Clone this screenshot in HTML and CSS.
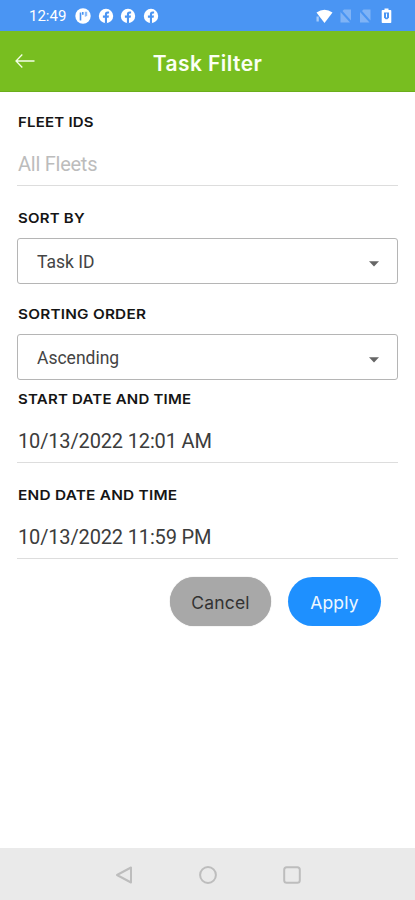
FILE: index.html
```html
<!DOCTYPE html>
<html lang="en">
<head>
<meta charset="utf-8">
<title>Task Filter</title>
<link rel="stylesheet" href="styles.css">
</head>
<body>
<div class="screen">
  <div class="status">
    <span class="clock">12:49</span>
    <svg class="app-icon" viewBox="0 0 16 16"><circle cx="8" cy="8" r="7.700" fill="#fff"/><path d="M5.500 4.500v8M7.800 4v2.800" fill="none" stroke="#4a95f3" stroke-width="1.600"/><path d="M9.800 3.800h2.400v3.400q-1 1.600-2.400 1.600z" fill="#8fbdf8"/></svg>
    <svg class="app-icon" viewBox="0 0 16 16"><circle cx="8" cy="8" r="7.200" fill="#fff"/><path d="M6.900 15.500V9.800H4.900V7.500h2V6.200q0-2.700 2.700-2.700h1.500v2h-1q-1.100 0-1.100 1.200v.8H11l-.4 2.300H9v5.700z" fill="#4a95f3"/></svg>
    <svg class="app-icon" viewBox="0 0 16 16"><circle cx="8" cy="8" r="7.200" fill="#fff"/><path d="M6.900 15.500V9.800H4.900V7.500h2V6.200q0-2.700 2.700-2.700h1.500v2h-1q-1.100 0-1.100 1.200v.8H11l-.4 2.300H9v5.700z" fill="#4a95f3"/></svg>
    <svg class="app-icon" viewBox="0 0 16 16"><circle cx="8" cy="8" r="7.200" fill="#fff"/><path d="M6.900 15.500V9.800H4.900V7.500h2V6.200q0-2.700 2.700-2.700h1.500v2h-1q-1.100 0-1.100 1.200v.8H11l-.4 2.300H9v5.700z" fill="#4a95f3"/></svg>
    <svg class="signals" width="76" height="16" viewBox="0 0 76 16">
      <path d="M.5 4.500Q8.500-1.200 16.500 4.500L8.500 15 3.500 8.500z" fill="#fff"/><path d="M.5 8.500h2.300v5H.5z" fill="#a5caf9"/>
      <g fill="#7fb3f6"><path d="M35 1.500V12.500L26.500 3 28 1.500z"/><path d="M24.500 4l9.500 10.500h-9.500z"/><path d="M54.500 1.500v11L46 3l1.500-1.500z"/><path d="M44 4l9.500 10.500H44z"/></g>
      <path d="M66.500 2h2V.5h4V2h2q.8 0 .8.800v11.400q0 .8-.8.800h-8q-.8 0-.8-.8V2.800q0-.8.800-.8z" fill="#fff"/><path d="M68 4.500h5v5l-1.500 1.800h-2L68 9.500z" fill="#4a95f3"/><path d="M70.500 5.500v4" stroke="#fff"/>
    </svg>
  </div>
  <header class="header">
    <svg class="back" width="20" height="16" viewBox="0 0 20 16"><path d="M7.300 1.500L1 8l6.300 6.500M1 8h18.500" fill="none" stroke="#f4ffe8" stroke-width="1.300"/></svg>
    <h1 class="title">Task Filter</h1>
  </header>
  <main class="form">
    <section class="field">
      <div class="label"><span class="l-fleet">FLEET IDS</span></div>
      <div class="input placeholder">All Fleets</div>
    </section>
    <section class="field">
      <div class="label"><span class="l-sort">SORT BY</span></div>
      <div class="select"><span>Task ID</span><svg width="10" height="6" viewBox="0 0 10 6"><path d="M0 .3h10L5 5.500z" fill="#666"/></svg></div>
    </section>
    <section class="field order">
      <div class="label"><span class="l-order">SORTING ORDER</span></div>
      <div class="select"><span>Ascending</span><svg width="10" height="6" viewBox="0 0 10 6"><path d="M0 .3h10L5 5.500z" fill="#666"/></svg></div>
    </section>
    <section class="field">
      <div class="label"><span class="l-start">START DATE AND TIME</span></div>
      <div class="input">10/13/2022 12:01 AM</div>
    </section>
    <section class="field last">
      <div class="label"><span class="l-end">END DATE AND TIME</span></div>
      <div class="input">10/13/2022 11:59 PM</div>
    </section>
    <div class="actions">
      <button class="btn cancel">Cancel</button>
      <button class="btn apply">Apply</button>
    </div>
  </main>
  <nav class="nav">
    <svg width="18" height="18" viewBox="0 0 18 18"><path d="M16 1.500v15L2 9z"/></svg>
    <svg width="18" height="18" viewBox="0 0 18 18"><circle cx="9" cy="9" r="7.900"/></svg>
    <svg width="18" height="18" viewBox="0 0 18 18"><rect x="1.200" y="1.200" width="15.600" height="15.600" rx="2.500"/></svg>
  </nav>
</div>
</body>
</html>
```
FILE: styles.css
```css
* { box-sizing: border-box; }
body { margin: 0; background: #fff; font-family: Roboto, sans-serif; }
.screen { width: 415px; height: 900px; display: flex; flex-direction: column; overflow: hidden; }
.status { height: 31px; flex: none; background: #4a95f3; display: flex; align-items: center; padding: 1px 23px 0 29px; color: #fff; }
.clock { width: 46px; font-size: 15px; font-weight: 400; white-space: nowrap; }
.app-icon { width: 16px; height: 16px; margin-right: 6.700px; flex: none; }
.signals { margin-left: auto; }
.header { height: 61px; flex: none; background: #78be20; border-bottom: 1px solid #6bae1c; display: grid; grid-template-columns: 38px 1fr 38px; align-items: center; padding-top: 5px; }
.back { margin-left: 15px; margin-top: -5px; }
.title { margin: 0; text-align: center; color: #fbfff5; font: 600 21px/30px Inter, sans-serif; letter-spacing: 0.450px; }
.form { flex: 1; padding: 18px 17px 0; }
.field { height: 96px; }
.order { height: 85px; }
.last { height: 94px; }
.label { height: 24px; padding-left: 1px; font: 600 13.500px/24px Inter, sans-serif; color: #151515; white-space: nowrap; }
.label span { display: inline-block; transform-origin: left center; letter-spacing: 0.200px; transform: scaleX(1.110); }
.label .l-order { transform: scaleX(1.135); }
.label .l-end { transform: scaleX(1.140); }
.input { height: 52px; padding: 18px 1px 0; font-size: 20px; line-height: 24px; letter-spacing: -0.150px; border-bottom: 1px solid #ddd; color: #3c3c3c; font-weight: 400; }
.placeholder { color: #bcbcbc; letter-spacing: -0.250px; }
.select { margin-top: 8px; height: 46px; border: 1px solid #b5b5b5; border-radius: 3px; display: flex; align-items: center; justify-content: space-between; padding: 1px 18px 0 19px; font-size: 17.500px; color: #444; }
.select svg { margin-top: 5px; }
.actions { display: flex; justify-content: flex-end; gap: 17px; padding: 0 17px; }
.btn { height: 49px; border: 0; border-radius: 25px; padding: 3px 0 0; font: 400 17.500px/24px Inter, sans-serif; letter-spacing: 0.150px; }
.cancel { width: 101px; background: #a8a8a8; color: #333; box-shadow: 0 0 1px #999; }
.apply { width: 93px; background: #1e90ff; color: #eef8ff; }
.nav { height: 52px; flex: none; background: #eaeaea; display: flex; justify-content: center; gap: 66px; align-items: center; padding-top: 1px; }
.nav svg { fill: none; stroke: #bdbdbd; stroke-width: 2; stroke-linejoin: round; }
```
